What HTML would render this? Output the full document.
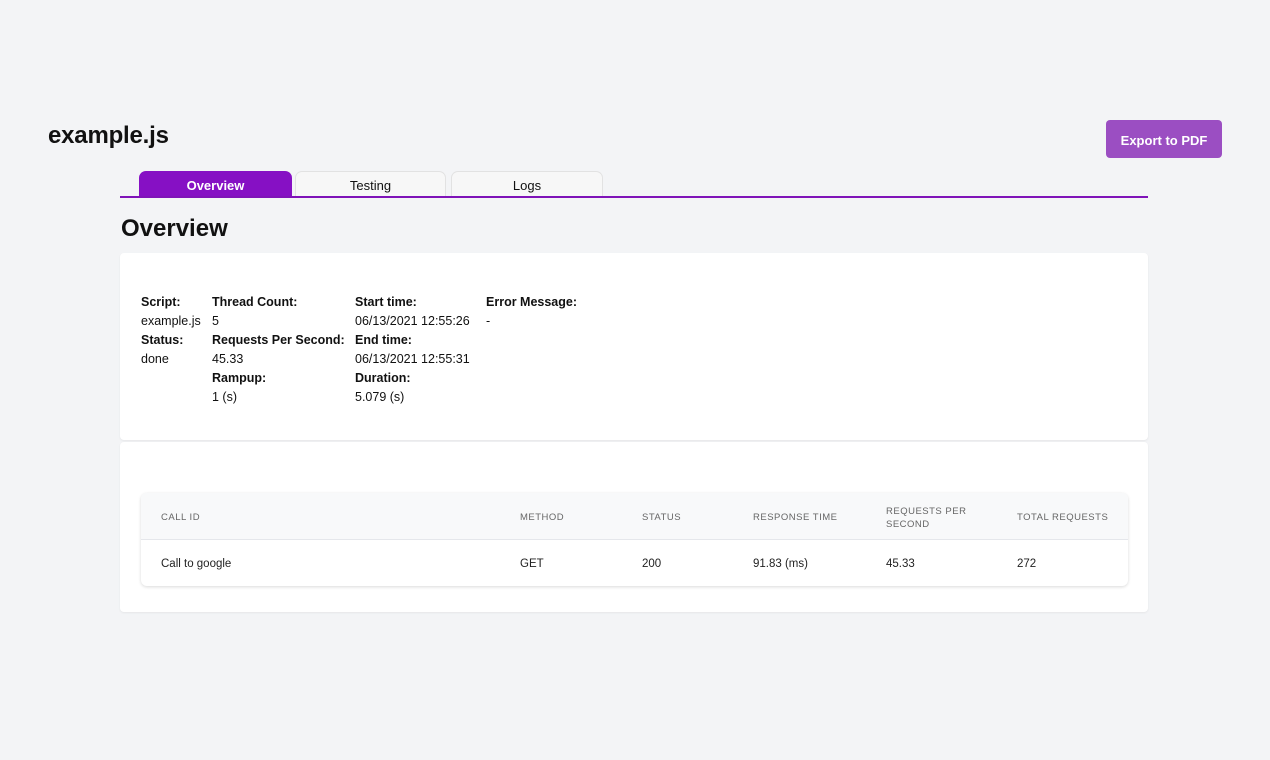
<!DOCTYPE html>
<html><head><meta charset="utf-8"><style>
*{margin:0;padding:0;box-sizing:border-box}
body{width:1270px;height:760px;background:#f3f4f6;font-family:"Liberation Sans",sans-serif;color:#111;position:relative;overflow:hidden}
.a{position:absolute;white-space:nowrap}
h1{position:absolute;left:48px;top:122px;font-size:24px;font-weight:bold;letter-spacing:-0.2px}
.btn{position:absolute;left:1106px;top:120px;width:116px;height:38px;background:#9b4ec2;border-radius:4px;color:#fff;font-size:13px;font-weight:bold;text-align:center;line-height:41px}
.tab{position:absolute;top:171px;height:26px;border:1px solid #e2e2e2;border-bottom:none;border-radius:7px 7px 0 0;background:#f7f7f7;font-size:13px;text-align:center;line-height:27px}
.line{position:absolute;left:120px;top:196px;width:1028px;height:2px;background:#7f13b8}
h2{position:absolute;left:121px;top:215px;font-size:24px;font-weight:bold}
.card{position:absolute;left:120px;width:1028px;background:#fff;border-radius:4px;box-shadow:0 1px 2px rgba(0,0,0,.06)}
.g{font-size:12.5px;line-height:19px}
.b{font-weight:bold}
.tbl{position:absolute;left:21px;top:51px;width:987px;height:93px;border-radius:6px;box-shadow:0 1px 3px rgba(0,0,0,.15);overflow:hidden;background:#fff}
.th{position:absolute;top:0;left:0;width:100%;height:47px;background:#f8f9fa;border-bottom:1px solid #e5e7eb}
.h{font-size:9.5px;color:#666;letter-spacing:.5px;line-height:13px}
.c{font-size:11.5px;color:#222}
</style></head><body>
<h1>example.js</h1>
<div class="btn">Export to PDF</div>
<div class="tab" style="left:139px;width:153px;background:#8610c4;border-color:#8610c4;color:#fff;font-weight:bold">Overview</div>
<div class="tab" style="left:295px;width:151px">Testing</div>
<div class="tab" style="left:451px;width:152px">Logs</div>
<div class="line"></div>
<h2>Overview</h2>
<div class="card" style="top:253px;height:187px">
 <div class="a g" style="left:21px;top:40px"><span class="b">Script:</span><br>example.js<br><span class="b">Status:</span><br>done</div>
 <div class="a g" style="left:92px;top:40px"><span class="b">Thread Count:</span><br>5<br><span class="b">Requests Per Second:</span><br>45.33<br><span class="b">Rampup:</span><br>1 (s)</div>
 <div class="a g" style="left:235px;top:40px"><span class="b">Start time:</span><br>06/13/2021 12:55:26<br><span class="b">End time:</span><br>06/13/2021 12:55:31<br><span class="b">Duration:</span><br>5.079 (s)</div>
 <div class="a g" style="left:366px;top:40px"><span class="b">Error Message:</span><br>-</div>
</div>
<div class="card" style="top:442px;height:170px">
 <div class="tbl">
  <div class="th"></div>
  <div class="a h" style="left:20px;top:18px">CALL ID</div>
  <div class="a h" style="left:379px;top:18px">METHOD</div>
  <div class="a h" style="left:501px;top:18px">STATUS</div>
  <div class="a h" style="left:612px;top:18px">RESPONSE TIME</div>
  <div class="a h" style="left:745px;top:12px">REQUESTS PER<br>SECOND</div>
  <div class="a h" style="left:876px;top:18px">TOTAL REQUESTS</div>
  <div class="a c" style="left:20px;top:65px">Call to google</div>
  <div class="a c" style="left:379px;top:65px">GET</div>
  <div class="a c" style="left:501px;top:65px">200</div>
  <div class="a c" style="left:612px;top:65px">91.83 (ms)</div>
  <div class="a c" style="left:745px;top:65px">45.33</div>
  <div class="a c" style="left:876px;top:65px">272</div>
 </div>
</div>
</body></html>
